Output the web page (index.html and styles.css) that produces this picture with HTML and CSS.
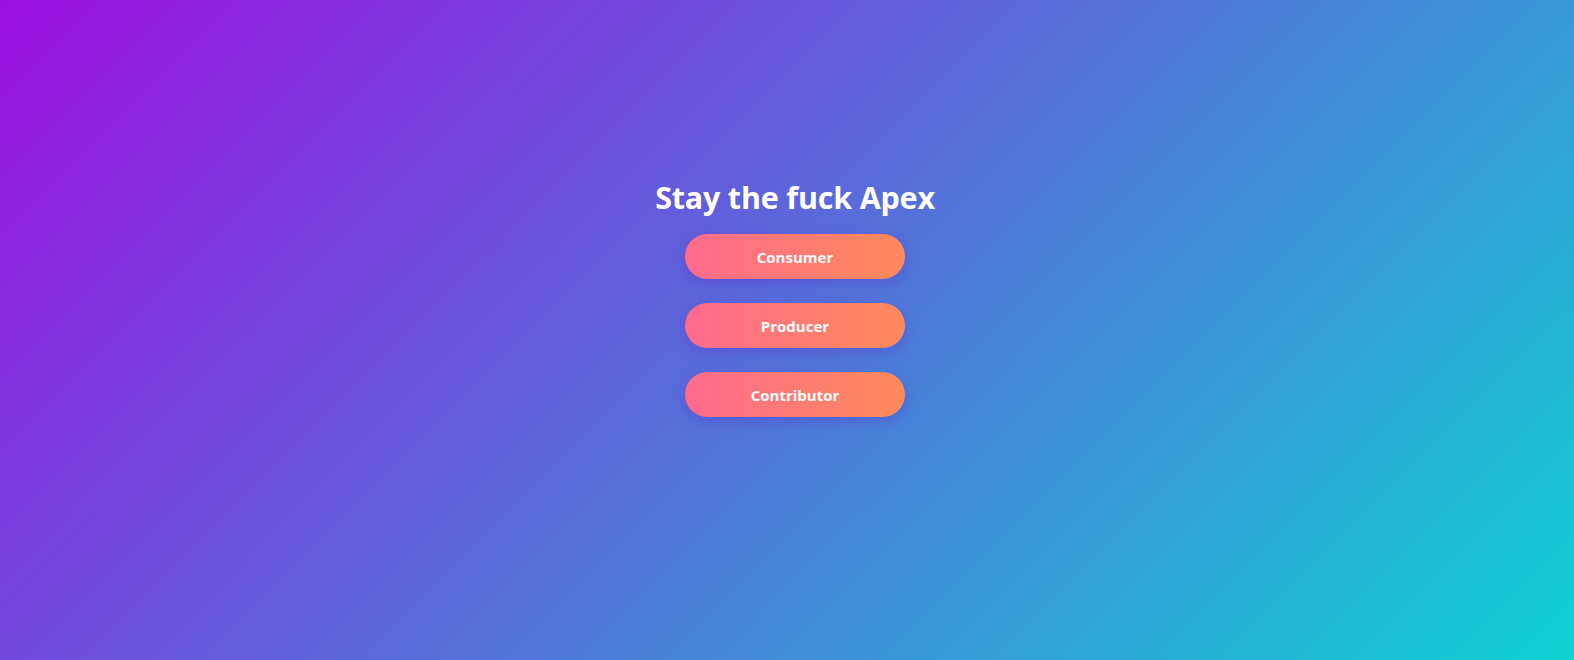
FILE: index.html
```html
<!DOCTYPE html>
<html lang="en">
<head>
<meta charset="utf-8">
<title>Stay the fuck Apex</title>
<link rel="stylesheet" href="styles.css">
</head>
<body>
<main class="page">
  <div class="panel">
    <h1 class="title">Stay the fuck Apex</h1>
    <div class="actions">
      <button class="btn">Consumer</button>
      <button class="btn">Producer</button>
      <button class="btn">Contributor</button>
    </div>
  </div>
</main>
</body>
</html>
```
FILE: styles.css
```css
html, body {
  margin: 0;
  padding: 0;
  height: 100%;
}
body {
  font-family: "Open Sans", "Noto Sans", "Liberation Sans", sans-serif;
  background: linear-gradient(135deg, #9c0fe0 0%, #0ed2d3 100%);
  color: #fff;
  overflow: hidden;
}
.page {
  min-height: 100vh;
  display: flex;
  justify-content: center;
  align-items: flex-start;
  padding: 175px 0 0 16px;
  box-sizing: border-box;
}
.panel {
  display: flex;
  flex-direction: column;
  align-items: center;
}
.title {
  margin: 0 0 15px;
  font-size: 30.5px;
  font-weight: 700;
  line-height: 44px;
  letter-spacing: -0.2px;
}
.actions {
  display: flex;
  flex-direction: column;
  gap: 24px;
}
.btn {
  width: 220px;
  height: 45px;
  border: none;
  border-radius: 23px;
  background: linear-gradient(90deg, #ff6b8d 0%, #ff8a5a 100%);
  color: #fff;
  font-family: inherit;
  font-size: 15px;
  font-weight: 700;
  box-shadow: 0 4px 14px rgba(90, 40, 200, 0.35);
  cursor: pointer;
}
```
